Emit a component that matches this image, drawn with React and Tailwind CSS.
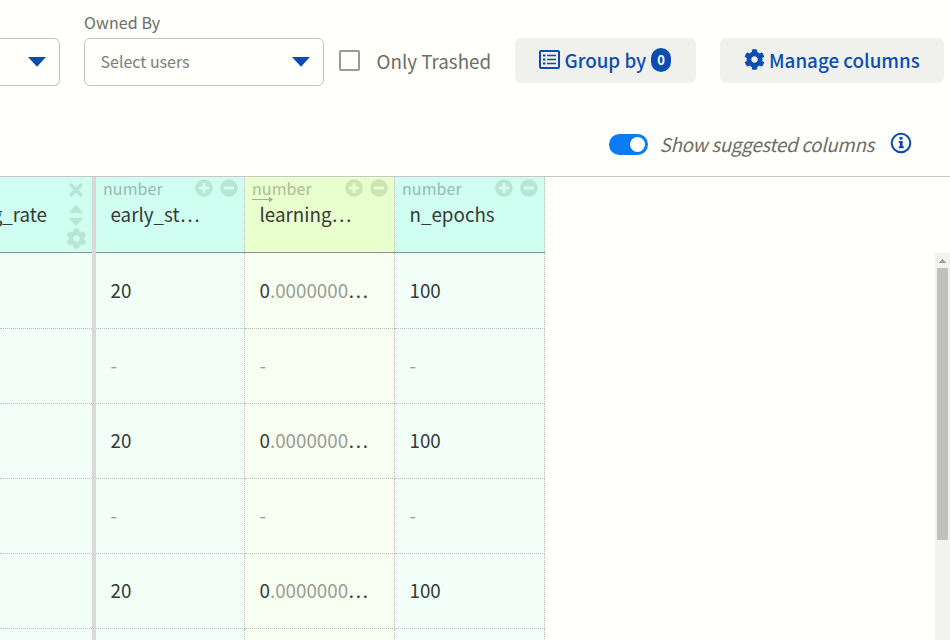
import { FaCog, FaPlusCircle, FaMinusCircle, FaTimes } from "react-icons/fa";

const columns = [
  { name: "early_st…", head: "bg-[#d0fff1]", cell: "bg-[#f2fff9]", width: "w-[149px]", value: "20" },
  { name: "learning…", head: "bg-[#e9ffce]", cell: "bg-[#f9fff0]", width: "w-[150px]", value: "0", rest: ".0000000", arrow: true },
  { name: "n_epochs", head: "bg-[#d0fff1]", cell: "bg-[#f2fff9]", width: "w-[150px]", value: "100" },
];

const rows = [true, false, true, false, true];

function Caret() {
  return (
    <svg width="18" height="10" viewBox="0 0 18 10" fill="#0b4db0">
      <path d="M0 0H18L9 9.8Z" />
    </svg>
  );
}

function ListIcon() {
  return (
    <svg className="mb-[2px]" width="21" height="19" viewBox="0 0 21 19" fill="none" stroke="#0b4db0">
      <rect x="1" y="1" width="19" height="17" rx="1" strokeWidth="2" />
      <path d="M4 5.5h2.5M4 9.5h2.5M4 13.5h2.5" strokeWidth="2" />
      <path d="M8 5.5h9M8 9.5h9M8 13.5h9" strokeWidth="1.6" />
    </svg>
  );
}

function InfoIcon() {
  return (
    <svg width="22" height="22" viewBox="0 0 22 22" fill="#0b4db0">
      <circle cx="11" cy="11" r="9.3" fill="none" stroke="#0b4db0" strokeWidth="2" />
      <rect x="9.5" y="5" width="3" height="2.7" rx="0.4" />
      <path d="M8.8 9h3.9v5.3h1.1v1.9H8.8v-1.9h1.1v-3.4H8.8Z" />
    </svg>
  );
}

function SuggestedHeader({ col }) {
  return (
    <div className={`${col.width} ${col.head} h-[75px] shrink-0 border-r border-dotted border-[#bcbdb9]`}>
      <div className="flex h-[23px] items-start pl-[7px]">
        <div className="relative w-[92px] shrink-0 text-[16px] leading-[22px] tracking-[0.08px]">
          <span className={col.arrow ? "text-[#a9bd96]" : "text-[#94baab]"}>number</span>
          {col.arrow && (
            <svg className="absolute top-[19px] left-0" width="22" height="7" viewBox="0 0 22 7" fill="#9eb08c">
              <path d="M0 3h17V0.5L21 3.5L17 6.5V4H0Z" />
            </svg>
          )}
        </div>
        <div className={`mt-[2px] flex gap-[6.5px] ${col.arrow ? "text-[#cce5b4]" : "text-[#b9e5d4]"} ${col.value === "20" ? "" : "ml-[1px]"}`}>
          <FaPlusCircle size={18} />
          <FaMinusCircle size={18} />
        </div>
      </div>
      <div className="pl-[14.5px] text-[18.8px] leading-[28px] text-[#333b36]">{col.name}</div>
    </div>
  );
}

export default function App() {
  return (
    <div className="flex h-[640px] w-[950px] flex-col overflow-hidden bg-[#fffffb] font-['Noto_Sans_CJK_SC',sans-serif] whitespace-nowrap text-[#6b6d67]">
      <div className="flex h-[120px] shrink-0">
        <div className="mt-[38px] flex h-[48px] w-[60px] items-center justify-end rounded-r-[6px] border border-l-0 border-[#c3c4bf] pr-[13px]">
          <Caret />
        </div>
        <div className="ml-[24px] w-[240px]">
          <div className="h-[38px] pt-[11px] text-[16px] leading-[22px] tracking-[0.1px]">Owned By</div>
          <div className="flex h-[48px] items-center justify-between rounded-[6px] border border-[#c3c4bf] pr-[13px] pl-[15.5px]">
            <span className="mb-[2px] text-[16px] leading-[22px] text-[#7c7e78]">Select users</span>
            <Caret />
          </div>
        </div>
        <div className="mt-[38px] ml-[15px] flex h-[45px] w-[176px] items-center">
          <div className="mb-px h-[21px] w-[21px] rounded-[2px] border-2 border-[#999b96]" />
          <span className="ml-[16.5px] text-[18.8px] leading-[28px]">Only Trashed</span>
        </div>
        <div className="mt-[38px] flex h-[45px] w-[181px] items-center rounded-[6px] bg-[#f0f1ed] pl-[24px] text-[#0b4db0]">
          <ListIcon />
          <span className="mb-[2px] ml-[4.5px] w-[83px] text-[18.8px] leading-[28px] font-medium">Group by</span>
          <span className="mb-[2px] ml-[3.5px] flex h-[24px] w-[20px] items-center justify-center rounded-full bg-[#0b4db0] text-[13px] leading-[18px] font-bold text-white">0</span>
        </div>
        <div className="mt-[38px] ml-[24px] flex h-[45px] w-[224px] items-center rounded-[6px] bg-[#f0f1ed] pl-[24px] text-[#0b4db0]">
          <FaCog size={21} className="mb-[2px]" />
          <span className="mb-[2px] ml-[4px] text-[18.8px] leading-[28px] font-medium">Manage columns</span>
        </div>
      </div>

      <div className="flex h-[57px] shrink-0 items-start border-b border-[#c6c7c2] pt-[10px] pl-[609px]">
        <div className="mt-[4px] flex h-[21px] w-[39px] items-center justify-end rounded-full bg-[#097bf5] pr-[3px]">
          <div className="h-[15px] w-[15px] rounded-full bg-white" />
        </div>
        <span className="ml-[11.5px] w-[230px] text-[18.8px] leading-[28px] tracking-[-0.29px] italic">Show suggested columns</span>
        <div className="mt-[2px]">
          <InfoIcon />
        </div>
      </div>

      <div className="flex min-h-0 flex-1">
        <div className="w-[545px] shrink-0 overflow-hidden">
          <div className="flex h-[76px] border-b border-[#8d948f]">
            <div className="flex w-[92px] shrink-0 justify-between bg-[#d0fff1]">
              <div className="flex w-[47px] justify-end pt-[23px] text-[18.8px] leading-[28px] text-[#333b36]">g_rate</div>
              <div className="flex w-[32px] flex-col items-center pt-[3px] text-[#b9e5d4]">
                <FaTimes size={20} />
                <svg className="mt-[5px]" width="16" height="22" viewBox="0 0 15 22" fill="currentColor">
                  <path d="M0 8L7.5 0L15 8ZM0 13H15L7.5 21Z" />
                </svg>
                <FaCog size={21} className="mt-px" />
              </div>
            </div>
            <div className="h-[76px] w-[4px] shrink-0 bg-[#d9dad7]" />
            {columns.map((col) => (
              <SuggestedHeader key={col.name} col={col} />
            ))}
          </div>
          {rows.map((filled, i) => (
            <div key={i} className={`flex ${i === 0 ? "h-[76px]" : "h-[75px]"}`}>
              <div className="w-[92px] shrink-0 border-b border-dotted border-[#bcbdb9] bg-[#f2fff9]" />
              <div className="w-[4px] shrink-0 bg-[#d9dad7]" />
              {columns.map((col) => (
                <div key={col.name} className={`${col.width} ${col.cell} flex shrink-0 items-center border-r border-b border-dotted border-[#bcbdb9] pb-[2px] pl-[14.5px] text-[18.8px] leading-[28px] text-[#333b36]`}>
                  {filled ? (
                    <span>
                      {col.value}
                      {col.rest && <span className="text-[#999d95]">{col.rest}</span>}
                      {col.rest && <span className="ml-[0.5px] tracking-[1.9px]">...</span>}
                    </span>
                  ) : (
                    <span className="text-[#999d95]">-</span>
                  )}
                </div>
              ))}
            </div>
          ))}
          <div className="flex h-[12px]">
            <div className="w-[92px] shrink-0 bg-[#f2fff9]" />
            <div className="w-[4px] shrink-0 bg-[#d9dad7]" />
            {columns.map((col) => (
              <div key={col.name} className={`${col.width} ${col.cell} shrink-0 border-r border-dotted border-[#bcbdb9]`} />
            ))}
          </div>
        </div>
        <div className="mt-[76px] ml-auto flex w-[15px] flex-col items-center bg-[#f1f2ee]">
          <svg className="mt-[6px] h-[4px] w-[7px]" viewBox="0 0 7 4" fill="#9d9e9a">
            <path d="M3 0h1v1h1v1h1v1h1v1H0V3h1V2h1V1h1Z" />
          </svg>
          <div className="mt-[5px] h-[272px] w-[11px] bg-[#c0c1bd]" />
        </div>
      </div>
    </div>
  );
}
